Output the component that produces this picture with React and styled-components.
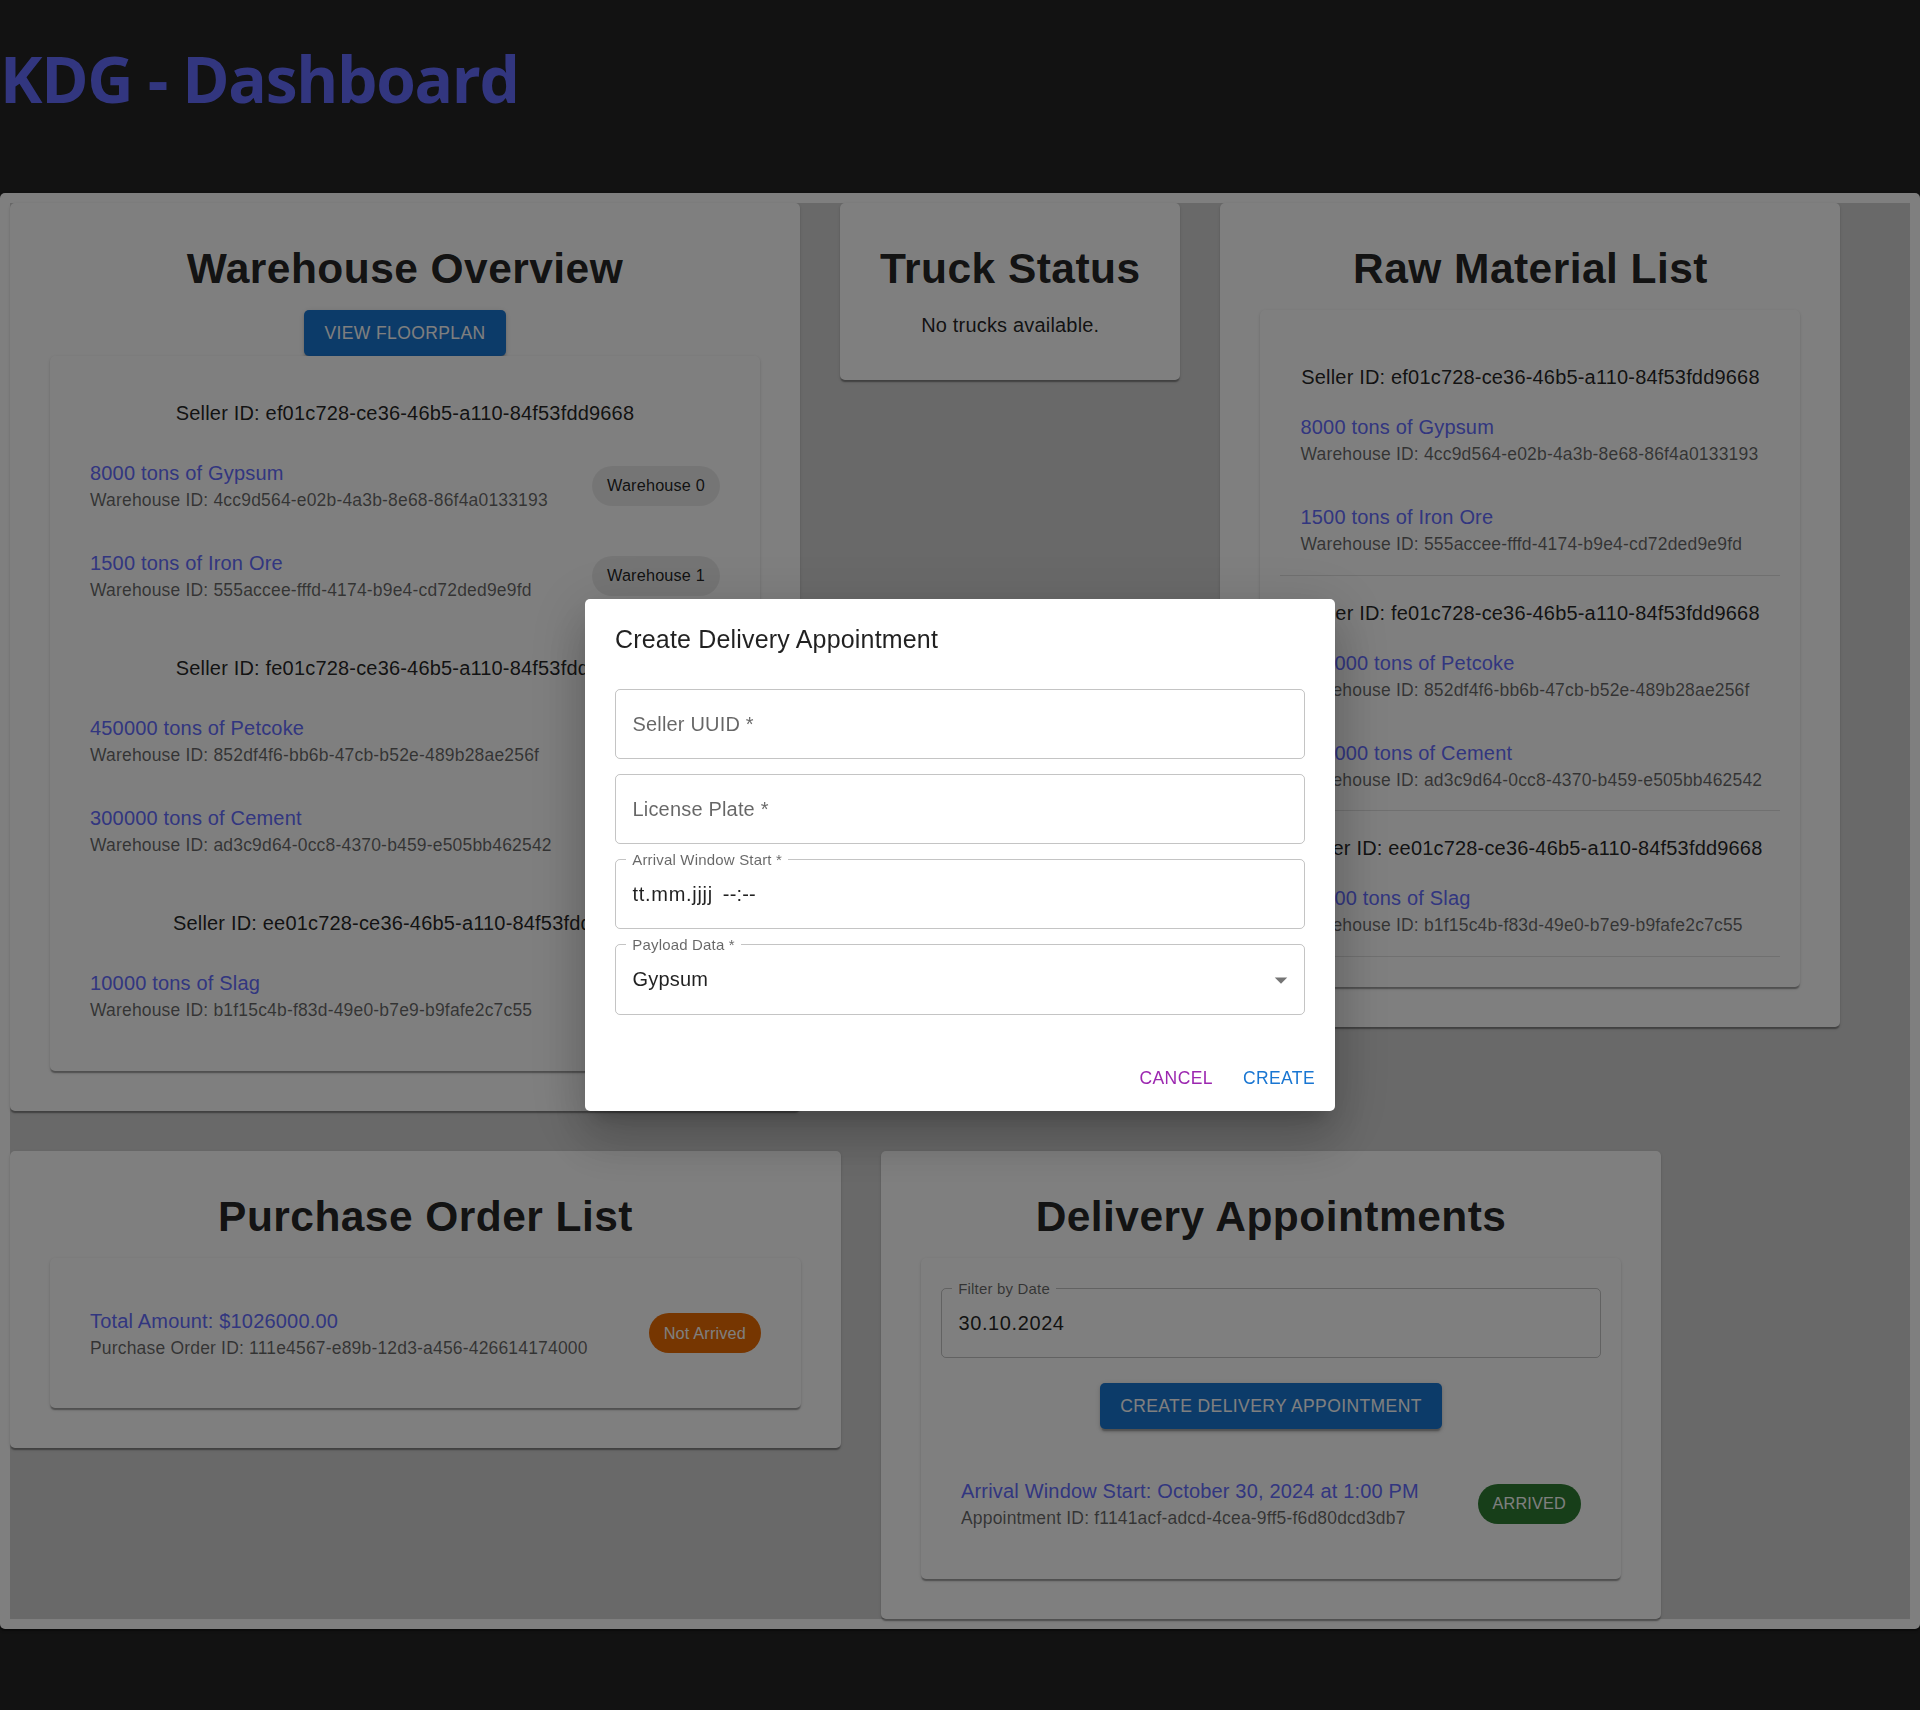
import React from "react";
import styled, { createGlobalStyle } from "styled-components";

const GlobalStyle = createGlobalStyle`
  html, body {
    margin: 0;
    padding: 0;
    background: #242424;
  }
  body {
    min-height: 100vh;
    font-family: "Liberation Sans", Arial, sans-serif;
    letter-spacing: 0.18px;
  }
`;

const elevation1 =
  "0 2.5px 1.25px -1.25px rgba(0,0,0,0.2), 0 1.25px 1.25px 0 rgba(0,0,0,0.14), 0 1.25px 3.75px 0 rgba(0,0,0,0.12)";
const elevation2 =
  "0 3.75px 1.25px -2.5px rgba(0,0,0,0.2), 0 2.5px 2.5px 0 rgba(0,0,0,0.14), 0 1.25px 6.25px 0 rgba(0,0,0,0.12)";
const elevation24 =
  "0 13.75px 18.75px -8.75px rgba(0,0,0,0.2), 0 30px 47.5px 3.75px rgba(0,0,0,0.14), 0 11.25px 57.5px 10px rgba(0,0,0,0.12)";

const Header = styled.header`
  height: 193px;
  box-sizing: border-box;
  padding-top: 44px;
`;

const Title = styled.h1`
  margin: 0;
  font-family: "Open Sans", "Noto Sans", sans-serif;
  font-weight: 700;
  font-size: 64px;
  line-height: 70.4px;
  color: #646cff;
  letter-spacing: -1.3px;
`;

const Shell = styled.main`
  background: #fff;
  padding: 10px;
  border-radius: 5px;
  box-shadow: ${elevation1};
`;

const Board = styled.div`
  background: #d3d3d3;
  display: flex;
  flex-wrap: wrap;
  align-items: flex-start;
  gap: 40px;
`;

const Card = styled.section`
  background: #fff;
  border-radius: 5px;
  box-shadow: ${elevation1};
  padding: 40px;
  width: ${(p) => (p.$w ? `${p.$w}px` : "auto")};
  box-sizing: border-box;
  display: flex;
  flex-direction: column;
`;

const CardTitle = styled.h2`
  margin: 0 0 14.9px;
  font-size: 42.5px;
  line-height: 52.5px;
  font-weight: 700;
  letter-spacing: 0.45px;
  text-align: center;
  color: rgba(0, 0, 0, 0.87);
`;

const Body = styled.p`
  margin: 0;
  font-size: 20px;
  line-height: 30px;
  text-align: center;
  color: rgba(0, 0, 0, 0.87);
`;

const Button = styled.button`
  align-self: center;
  background: #1976d2;
  color: #fff;
  border: 0;
  border-radius: 5px;
  padding: 7.5px 20px;
  font-family: "Liberation Sans", Arial, sans-serif;
  font-size: 17.5px;
  line-height: 30.6px;
  letter-spacing: 0.4px;
  text-transform: uppercase;
  box-shadow: ${elevation2};
  margin: ${(p) => p.$m || "0"};
`;

const Panel = styled.div`
  background: #fff;
  border-radius: 5px;
  box-shadow: ${elevation1};
  padding: 20px;
  display: flex;
  flex-direction: column;
`;

const SellerLine = styled.div`
  margin: 22px 0 ${(p) => (p.$tight ? "2.5px" : "3px")};
  font-size: 20px;
  line-height: 30px;
  text-align: center;
  white-space: nowrap;
  color: rgba(0, 0, 0, 0.87);
`;

const List = styled.div`
  padding: 10px 0;
`;

const Item = styled.div`
  display: flex;
  align-items: center;
  justify-content: space-between;
  padding: 10px 20px;
`;

const ItemText = styled.div`
  margin: 7.5px 0;
  white-space: nowrap;
`;

const Primary = styled.div`
  font-size: 20px;
  line-height: 30px;
  color: #646cff;
`;

const Secondary = styled.div`
  font-size: 17.5px;
  line-height: 25px;
  color: rgba(0, 0, 0, 0.6);
`;

const chipColors = {
  default: ["rgba(0,0,0,0.08)", "rgba(0,0,0,0.87)"],
  warning: ["#ed6c02", "#fff"],
  success: ["#2e7d32", "#fff"],
};

const Chip = styled.span`
  flex: none;
  height: 40px;
  border-radius: 20px;
  padding: 0 15px;
  display: inline-flex;
  align-items: center;
  font-size: 16.25px;
  background: ${(p) => chipColors[p.$tone || "default"][0]};
  color: ${(p) => chipColors[p.$tone || "default"][1]};
`;

const Divider = styled.hr`
  margin: 0;
  border: 0;
  border-top: 1px solid rgba(0, 0, 0, 0.12);
`;

/* dialog */

const Backdrop = styled.div`
  position: fixed;
  inset: 0;
  background: rgba(0, 0, 0, 0.5);
`;

const DialogLayer = styled.div`
  position: fixed;
  inset: 0;
  display: flex;
  align-items: center;
  justify-content: center;
`;

const DialogPaper = styled.div`
  width: 750px;
  background: #fff;
  border-radius: 5px;
  box-shadow: ${elevation24};
`;

const DialogTitle = styled.h2`
  margin: 0;
  padding: 20px 30px;
  font-size: 25px;
  line-height: 40px;
  font-weight: 400;
  color: rgba(0, 0, 0, 0.87);
`;

const DialogContent = styled.div`
  padding: 0 30px 25px;
  display: flex;
  flex-direction: column;
`;

const DialogActions = styled.div`
  display: flex;
  justify-content: flex-end;
  gap: 10px;
  padding: 10px;
`;

const TextButton = styled.button`
  background: none;
  border: 0;
  padding: 7.5px 10px;
  font-family: "Liberation Sans", Arial, sans-serif;
  font-size: 17.5px;
  line-height: 30.6px;
  letter-spacing: 0.4px;
  text-transform: uppercase;
  color: ${(p) => p.$color};
`;

const Outline = styled.fieldset`
  margin: 2.5px 0 5px;
  padding: 0;
  min-width: 0;
  border: 1px solid rgba(0, 0, 0, 0.23);
  border-radius: 5px;
`;

const Legend = styled.legend`
  margin-left: 10px;
  padding: ${(p) => (p.$notched ? "0 6.25px" : "0")};
  width: ${(p) => (p.$notched ? "auto" : "0")};
  height: 15px;
  box-sizing: border-box;
  white-space: nowrap;
  font-size: 15px;
  line-height: 15px;
  color: rgba(0, 0, 0, 0.6);
`;

const Input = styled.input`
  display: block;
  width: 100%;
  height: 61.5px;
  box-sizing: border-box;
  border: 0;
  outline: 0;
  background: transparent;
  padding: 13.1px 16.5px 19.65px;
  font-family: "Liberation Sans", Arial, sans-serif;
  font-size: 20px;
  line-height: 28.75px;
  letter-spacing: 0.18px;
  color: rgba(0, 0, 0, 0.87);
  &::placeholder {
    color: rgba(0, 0, 0, 0.6);
    opacity: 1;
  }
`;

const ValueRow = styled.div`
  display: flex;
  align-items: center;
  gap: 10px;
  padding: 13.1px 7.75px 19.65px 16.5px;
  font-size: 20px;
  line-height: 28.75px;
  color: rgba(0, 0, 0, 0.87);
`;

const Segment = styled.span`
  letter-spacing: ${(p) => p.$ls || "0.18px"};
`;

const Grow = styled.span`
  flex: 1;
`;

const Field = ({ label, children }) => (
  <Outline>
    <Legend $notched={!!label}>{label}</Legend>
    {children}
  </Outline>
);

const ArrowDropDown = () => (
  <svg width="30" height="30" viewBox="0 0 24 24" fill="rgba(0,0,0,0.54)">
    <path d="M7 10l5 5 5-5z" />
  </svg>
);

const groups = [
  {
    seller: "ef01c728-ce36-46b5-a110-84f53fdd9668",
    items: [
      { name: "8000 tons of Gypsum", id: "4cc9d564-e02b-4a3b-8e68-86f4a0133193", wh: "Warehouse 0" },
      { name: "1500 tons of Iron Ore", id: "555accee-fffd-4174-b9e4-cd72ded9e9fd", wh: "Warehouse 1" },
    ],
  },
  {
    seller: "fe01c728-ce36-46b5-a110-84f53fdd9668",
    items: [
      { name: "450000 tons of Petcoke", id: "852df4f6-bb6b-47cb-b52e-489b28ae256f", wh: "Warehouse 2" },
      { name: "300000 tons of Cement", id: "ad3c9d64-0cc8-4370-b459-e505bb462542", wh: "Warehouse 3" },
    ],
  },
  {
    seller: "ee01c728-ce36-46b5-a110-84f53fdd9668",
    items: [{ name: "10000 tons of Slag", id: "b1f15c4b-f83d-49e0-b7e9-b9fafe2c7c55", wh: "Warehouse 4" }],
  },
];

function WarehouseOverview() {
  return (
    <Card $w={790}>
      <CardTitle>Warehouse Overview</CardTitle>
      <Button>View Floorplan</Button>
      <Panel>
        {groups.map((g) => (
          <div key={g.seller}>
            <SellerLine>Seller ID: {g.seller}</SellerLine>
            <List>
              {g.items.map((it) => (
                <Item key={it.id}>
                  <ItemText>
                    <Primary>{it.name}</Primary>
                    <Secondary>Warehouse ID: {it.id}</Secondary>
                  </ItemText>
                  <Chip>{it.wh}</Chip>
                </Item>
              ))}
            </List>
          </div>
        ))}
      </Panel>
    </Card>
  );
}

function RawMaterialList() {
  return (
    <Card $w={620}>
      <CardTitle>Raw Material List</CardTitle>
      <Panel>
        <List>
          {groups.map((g) => (
            <div key={g.seller}>
              <SellerLine $tight>Seller ID: {g.seller}</SellerLine>
              {g.items.map((it) => (
                <Item key={it.id}>
                  <ItemText>
                    <Primary>{it.name}</Primary>
                    <Secondary>Warehouse ID: {it.id}</Secondary>
                  </ItemText>
                </Item>
              ))}
              <Divider />
            </div>
          ))}
        </List>
      </Panel>
    </Card>
  );
}

function PurchaseOrderList() {
  return (
    <Card $w={831}>
      <CardTitle>Purchase Order List</CardTitle>
      <Panel>
        <List>
          <Item>
            <ItemText>
              <Primary>Total Amount: $1026000.00</Primary>
              <Secondary>Purchase Order ID: 111e4567-e89b-12d3-a456-426614174000</Secondary>
            </ItemText>
            <Chip $tone="warning">Not Arrived</Chip>
          </Item>
        </List>
      </Panel>
    </Card>
  );
}

function DeliveryAppointments() {
  return (
    <Card $w={780}>
      <CardTitle>Delivery Appointments</CardTitle>
      <Panel>
        <Field label="Filter by Date">
          <ValueRow>
            <Segment $ls="0.6px">30.10.2024</Segment>
          </ValueRow>
        </Field>
        <Button $m="20px 0">Create Delivery Appointment</Button>
        <List>
          <Item>
            <ItemText>
              <Primary>Arrival Window Start: October 30, 2024 at 1:00 PM</Primary>
              <Secondary>Appointment ID: f1141acf-adcd-4cea-9ff5-f6d80dcd3db7</Secondary>
            </ItemText>
            <Chip $tone="success">ARRIVED</Chip>
          </Item>
        </List>
      </Panel>
    </Card>
  );
}

function CreateDialog() {
  return (
    <>
      <Backdrop />
      <DialogLayer>
        <DialogPaper>
          <DialogTitle>Create Delivery Appointment</DialogTitle>
          <DialogContent>
            <Field>
              <Input placeholder="Seller UUID *" />
            </Field>
            <Field>
              <Input placeholder="License Plate *" />
            </Field>
            <Field label="Arrival Window Start *">
              <ValueRow>
                <Segment $ls="0.7px">tt.mm.jjjj</Segment>
                <Segment>--:--</Segment>
              </ValueRow>
            </Field>
            <Field label="Payload Data *">
              <ValueRow>
                <Grow>Gypsum</Grow>
                <ArrowDropDown />
              </ValueRow>
            </Field>
          </DialogContent>
          <DialogActions>
            <TextButton $color="#9c27b0">Cancel</TextButton>
            <TextButton $color="#1976d2">Create</TextButton>
          </DialogActions>
        </DialogPaper>
      </DialogLayer>
    </>
  );
}

export default function App() {
  return (
    <>
      <GlobalStyle />
      <Header>
        <Title>KDG - Dashboard</Title>
      </Header>
      <Shell>
        <Board>
          <WarehouseOverview />
          <Card>
            <CardTitle>Truck Status</CardTitle>
            <Body>No trucks available.</Body>
          </Card>
          <RawMaterialList />
          <PurchaseOrderList />
          <DeliveryAppointments />
        </Board>
      </Shell>
      <CreateDialog />
    </>
  );
}
